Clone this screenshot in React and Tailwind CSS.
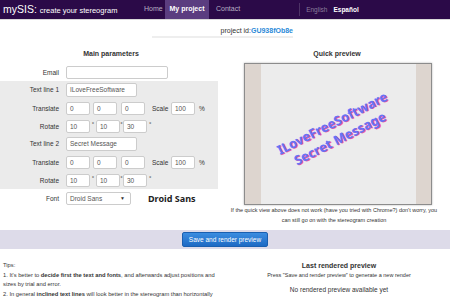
import React from 'react';

const inputCls = 'h-full bg-white border border-[#cccccc] rounded-[2px] px-[3px] flex items-center text-[6.5px] text-[#555]';

const Field = ({ w, value }) => (
  <div className={`${inputCls} ${w}`}>{value}</div>
);

const Label = ({ children }) => (
  <div className="w-[66px] pr-[7px] text-right text-[6.5px] text-[#333] shrink-0">{children}</div>
);

const TextBlock = ({ text }) => (
  <div className="bg-[#ebebeb] pt-[2px] pb-[2px] flex flex-col gap-[5px]">
    <div className="flex items-center h-[14px]">
      <Label>Text line {text.n}</Label>
      <Field w="w-[71px]" value={text.value} />
    </div>
    <div className="flex items-center h-[13px]">
      <Label>Translate</Label>
      <Field w="w-[24px]" value="0" />
      <div className="w-[3px]" />
      <Field w="w-[24px]" value="0" />
      <div className="w-[4px]" />
      <Field w="w-[24px]" value="0" />
      <div className="w-[7px]" />
      <span className="text-[6.5px] text-[#333] w-[19px]">Scale</span>
      <Field w="w-[24px]" value="100" />
      <span className="text-[6.5px] text-[#333] ml-[4px]">%</span>
    </div>
    <div className="flex items-center h-[13px]">
      <Label>Rotate</Label>
      <Field w="w-[24px]" value="10" />
      <span className="w-[6px] text-center text-[6px] text-[#333] self-start">°</span>
      <Field w="w-[24px]" value="10" />
      <span className="w-[3px] text-center text-[6px] text-[#333] self-start">°</span>
      <Field w="w-[24px]" value="30" />
      <span className="ml-[2px] text-[6px] text-[#333] self-start">°</span>
    </div>
  </div>
);

const App = () => {
  return (
    <div className="w-[450px] h-[303px] overflow-hidden bg-white font-['Liberation_Sans',Arial,sans-serif] text-[#333]">
      {/* navbar */}
      <div className="h-[20px] bg-[#2b0a48] flex items-stretch border-b border-[#d9d9d9]">
        <div className="flex items-baseline pl-[3px] pt-[4px] text-white w-[141px]">
          <span className="text-[10.5px] leading-none">mySIS:</span>
          <span className="text-[7.5px] leading-none ml-[3px]">create your stereogram</span>
        </div>
        <div className="flex items-center text-[7px] text-[#b9b0c5] pl-[3px] w-[24px]">Home</div>
        <div className="w-[44px] bg-[#5b3d80] text-white text-[7px] font-bold flex items-center justify-center">My project</div>
        <div className="flex items-center text-[7px] text-[#b9b0c5] pl-[7px]">Contact</div>
        <div className="w-px bg-[#4d3366] my-[3px] ml-[59px]" />
        <div className="flex items-center text-[6.5px] text-[#8a7c9b] ml-[6px]">English</div>
        <div className="flex items-center text-[6.5px] text-white font-bold ml-[6px]">Español</div>
      </div>

      {/* project id */}
      <div className="mt-[6px] ml-[152px] w-[141px] h-[12px] border-b-2 border-[#eeeeee] text-right text-[7px] leading-[10px]">
        <span className="text-[#333]">project id:</span>
        <span className="text-[#2a8ad8] font-bold">GU938fOb8e</span>
      </div>

      {/* main section */}
      <div className="flex mt-[8px]">
        <div className="w-[218px] shrink-0 flex flex-col">
          <div className="h-[16px] flex items-center justify-center text-[7px] font-bold text-[#333] pl-[4px]">Main parameters</div>
          <div className="flex items-center h-[13px] mt-[4px]">
            <Label>Email</Label>
            <Field w="w-[102px]" value="" />
          </div>
          <div className="mt-[2px]">
            <TextBlock text={{ n: 1, value: 'ILoveFreeSoftware' }} />
            <TextBlock text={{ n: 2, value: 'Secret Message' }} />
          </div>
          <div className="flex items-center h-[13px] mt-[3px]">
            <Label>Font</Label>
            <div className={`${inputCls} w-[65px] justify-between`}>
              <span>Droid Sans</span>
              <span className="text-[5px] text-[#333] pr-[2px]">▼</span>
            </div>
            <span className="ml-[17px] text-[9px] font-bold text-[#222] font-['Noto_Sans',sans-serif]">Droid Sans</span>
          </div>
        </div>

        <div className="flex-1 flex flex-col items-center">
          <div className="h-[16px] flex items-center justify-center text-[7px] font-bold text-[#333] pl-[6px]">Quick preview</div>
          <div className="mt-[1px] ml-[26px] self-start w-[188px] h-[142px] border border-[#8c8c8c] bg-[#ddd5cf] flex shadow-[0_0_2px_rgba(0,0,0,0.3)]">
            <div className="w-[16px]" />
            <div className="flex-1 bg-[#ececec] relative overflow-hidden">
              <div className="absolute left-[0px] top-[50px] w-[150px] text-center rotate-[-27deg] font-['Noto_Sans',sans-serif] font-bold text-[13px] leading-[17px] text-[#6673f7] [text-shadow:1px_1px_0_#f05aa8]">
                <div>ILoveFreeSoftware</div>
                <div>Secret Message</div>
              </div>
            </div>
            <div className="w-[15px]" />
          </div>
          <div className="text-[5.5px] leading-[10px] text-[#333] text-center">
            <div>If the quick view above does not work (have you tried with Chrome?) don't worry, you</div>
            <div>can still go on with the stereogram creation</div>
          </div>
        </div>
      </div>

      {/* save band */}
      <div className="mt-[5px] h-[19px] bg-[#dddbe9] flex items-center justify-center">
        <div className="w-[86px] h-[15px] rounded-[2px] bg-gradient-to-b from-[#3b8de0] to-[#1d6ac4] border border-[#1a5fb0] text-white text-[6.5px] flex items-center justify-center">Save and render preview</div>
      </div>

      {/* bottom */}
      <div className="flex mt-[12px]">
        <div className="w-[222px] shrink-0 pl-[3px] text-[5.75px] leading-[9.7px] text-[#333] whitespace-nowrap">
          <div>Tips:</div>
          <div>1. It's better to <span className="font-bold">decide first the text and fonts</span>, and afterwards adjust positions and</div>
          <div>sizes by trial and error.</div>
          <div>2. In general <span className="font-bold">inclined text lines</span> will look better in the stereogram than horizontally</div>
        </div>
        <div className="flex-1 flex flex-col items-center text-[#333]">
          <div className="text-[7px] font-bold leading-[10px] pl-[6px]">Last rendered preview</div>
          <div className="text-[5.5px] leading-[9px] pl-[6px]">Press "Save and render preview" to generate a new render</div>
          <div className="text-[6.5px] leading-[10px] mt-[5px] pl-[6px]">No rendered preview available yet</div>
        </div>
      </div>
    </div>
  );
};

export default App;
